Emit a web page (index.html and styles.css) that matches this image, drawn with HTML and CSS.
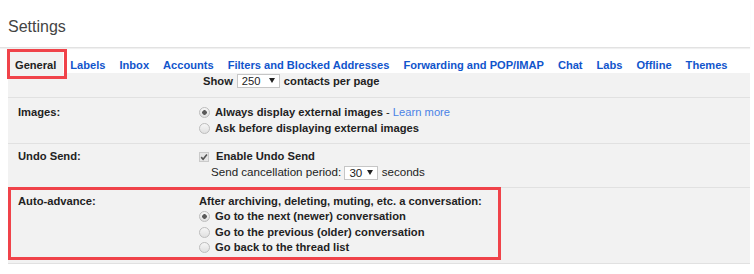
FILE: index.html
```html
<!DOCTYPE html>
<html lang="en">
<head>
  <meta charset="UTF-8">
  <title>Settings</title>
  <link rel="stylesheet" href="styles.css">
</head>
<body>
  <header class="title-bar">
    <h1 class="title">Settings</h1>
  </header>

  <nav class="tabs">
    <span class="tab tab-active">General</span>
    <a class="tab" href="#">Labels</a>
    <a class="tab" href="#">Inbox</a>
    <a class="tab" href="#">Accounts</a>
    <a class="tab" href="#">Filters and Blocked Addresses</a>
    <a class="tab" href="#">Forwarding and POP/IMAP</a>
    <a class="tab" href="#">Chat</a>
    <a class="tab" href="#">Labs</a>
    <a class="tab" href="#">Offline</a>
    <a class="tab" href="#">Themes</a>
  </nav>

  <div class="panel">
    <div class="row row-top">
      <div class="label"></div>
      <div class="value show-line">
        <b>Show</b>
        <span class="select select-250">250<i class="arrow"></i></span>
        <b>contacts per page</b>
      </div>
    </div>

    <div class="row row-images">
      <div class="label">Images:</div>
      <div class="value">
        <div class="option"><span class="radio checked"></span>Always display external images<span class="plain">&nbsp;- <a href="#" class="link">Learn more</a></span></div>
        <div class="option"><span class="radio"></span>Ask before displaying external images</div>
      </div>
    </div>

    <div class="row row-undo">
      <div class="label">Undo Send:</div>
      <div class="value">
        <div class="option">
          <svg class="check" width="10" height="10" viewBox="0 0 10 10">
            <rect x="0.5" y="0.5" width="9" height="9" fill="#e6e6e6" stroke="#cacaca"/>
            <path d="M2.2 5.1 L4.1 7.2 L7.9 2.4" fill="none" stroke="#555" stroke-width="1.6"/>
          </svg>Enable Undo Send
        </div>
        <div class="period">Send cancellation period: <span class="select select-30">30<i class="arrow"></i></span> seconds</div>
      </div>
    </div>

    <div class="row row-auto">
      <div class="label">Auto-advance:</div>
      <div class="value">
        <div class="heading">After archiving, deleting, muting, etc. a conversation:</div>
        <div class="option"><span class="radio checked"></span>Go to the next (newer) conversation</div>
        <div class="option"><span class="radio"></span>Go to the previous (older) conversation</div>
        <div class="option"><span class="radio"></span>Go back to the thread list</div>
      </div>
      <div class="annot"></div>
    </div>
  </div>
</body>
</html>
```

FILE: styles.css
```css
* {
  box-sizing: border-box;
}

body {
  margin: 0;
  background: #fff;
  color: #222;
  font-family: "Liberation Sans", Arial, sans-serif;
  font-size: 11.2px;
}

.title-bar {
  height: 48px;
  margin-right: 4px;
  padding: 17px 8px 0;
  border-bottom: 1px solid #e2e2e2;
  box-shadow: 0 1px 1px #f0f0f0;
}

.title {
  margin: 0;
  font-size: 16px;
  font-weight: normal;
  line-height: 20px;
  color: #444;
}

/* tab strip */
.tabs {
  display: flex;
  height: 21px;
  margin: 4px 4px 0 8px;
}

.tab {
  padding: 5px 7px 0;
  font-size: 11.1px;
  line-height: 16px;
  font-weight: bold;
  color: #15c;
  text-decoration: none;
  white-space: nowrap;
}

.tab-active {
  position: relative;
  color: #222;
  background: #f2f2f2;
}

.tab-active::after {
  content: "";
  position: absolute;
  top: -3px;
  bottom: -6px;
  left: -1px;
  right: -4px;
  border: 3px solid #f0434a;
}

/* settings table */
.panel {
  margin: 0 4px 0 8px;
  background: #f2f2f2;
}

.row {
  display: grid;
  grid-template-columns: 181px 1fr;
  padding-left: 10px;
  border-bottom: 1px solid #e1e1e1;
}

.label {
  font-weight: bold;
}

.row-top {
  height: 25px;
  padding-top: 1px;
}

.show-line {
  display: flex;
  align-items: center;
  gap: 4px;
  height: 13px;
  padding-left: 4px;
}

.row-images {
  padding: 6px 0 7px 10px;
  line-height: 16px;
}

.row-undo {
  padding: 5px 0 7px 10px;
  line-height: 15px;
}

.row-auto {
  position: relative;
  padding: 6px 0 8px 10px;
  line-height: 15.3px;
}

.option {
  display: flex;
  align-items: center;
  font-weight: bold;
}

.heading {
  font-weight: bold;
}

.plain {
  font-weight: normal;
}

.link {
  color: #4a82e6;
  text-decoration: none;
}

.radio {
  flex: none;
  width: 11px;
  height: 11px;
  margin-right: 5px;
  border: 1px solid #bdbdbd;
  border-radius: 50%;
  background: linear-gradient(#f6f6f6, #e0e0e0);
}

.radio.checked {
  background: radial-gradient(circle, #5a5a5a 0 2px, transparent 2.6px), linear-gradient(#f6f6f6, #e0e0e0);
}

.check {
  flex: none;
  margin-right: 7px;
}

.period {
  padding-left: 12px;
  font-size: 11.6px;
}

.select {
  display: inline-flex;
  align-items: center;
  justify-content: space-between;
  height: 14px;
  padding: 0 4px;
  border: 1px solid #c6c6c6;
  background: #fff;
  font-weight: normal;
  line-height: 12px;
  vertical-align: middle;
}

.select-250 {
  width: 43px;
}

.select-30 {
  width: 34px;
}

.arrow {
  width: 0;
  height: 0;
  border-left: 3px solid transparent;
  border-right: 3px solid transparent;
  border-top: 5px solid #222;
}

/* red highlight round the auto-advance row */
.annot {
  position: absolute;
  top: -1px;
  left: 0;
  width: 493px;
  height: 73px;
  border: 3px solid #f0434a;
  pointer-events: none;
}
```
